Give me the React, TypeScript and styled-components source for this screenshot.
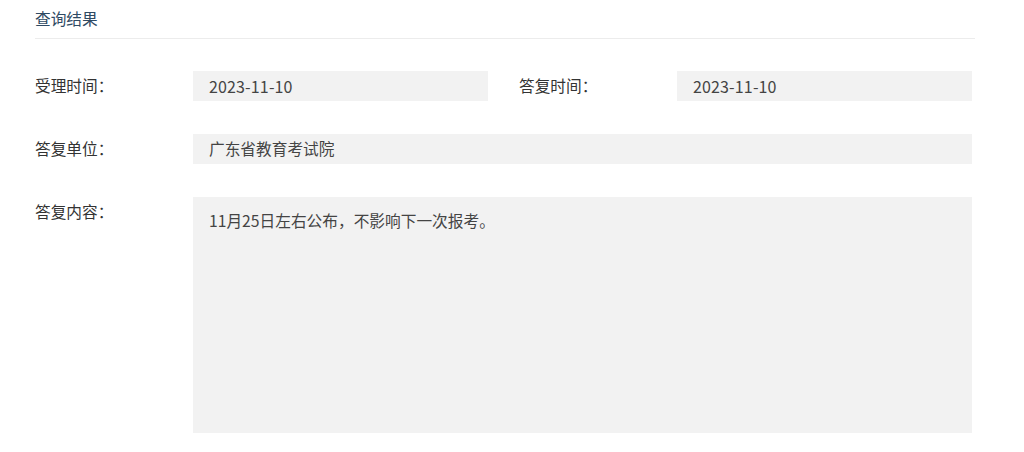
import React from 'react';
import styled, { createGlobalStyle } from 'styled-components';

const GlobalStyle = createGlobalStyle`
    body {
        margin: 0;
        background: #ffffff;
        font-family: "Noto Sans CJK SC", "Noto Sans", sans-serif;
    }
`

const Page = styled.div`
    width: 1024px;
    height: 452px;
    padding: 0 49px 0 35px;
    box-sizing: border-box;
    overflow: hidden;
`

const Title = styled.div`
    height: 38px;
    line-height: 38px;
    font-size: 15.7px;
    color: #2f4a63;
    border-bottom: 1px solid #ececec;
`

const Form = styled.div`
    display: grid;
    grid-template-columns: 158px 295px 31px 158px 295px;
    row-gap: 33px;
    padding-top: 32px;
`

const Label = styled.div<{ $col?: number }>`
    grid-column: ${p => p.$col ?? 1};
    height: 30px;
    line-height: 30px;
    font-size: 15.7px;
    color: #333;
`

const Field = styled.div<{ $wide?: boolean; $tall?: boolean; $col?: number }>`
    grid-column: ${p => (p.$wide ? '2 / 6' : `${p.$col ?? 2}`)};
    height: ${p => (p.$tall ? '236px' : '30px')};
    line-height: 30px;
    padding: ${p => (p.$tall ? '9px 16px' : '0 16px')};
    box-sizing: border-box;
    background: #f2f2f2;
    font-size: 15.7px;
    color: #444;
`

const DateText = styled.span`
    font-size: 16px;
    letter-spacing: 0.15px;
`

function App() {
    return (
        <Page>
            <GlobalStyle/>
            <Title>查询结果</Title>
            <Form>
                <Label>受理时间：</Label>
                <Field><DateText>2023-11-10</DateText></Field>
                <Label $col={4}>答复时间：</Label>
                <Field $col={5}><DateText>2023-11-10</DateText></Field>

                <Label>答复单位：</Label>
                <Field $wide>广东省教育考试院</Field>

                <Label>答复内容：</Label>
                <Field $wide $tall>11月25日左右公布，不影响下一次报考。</Field>
            </Form>
        </Page>
    );
}

export default App;
